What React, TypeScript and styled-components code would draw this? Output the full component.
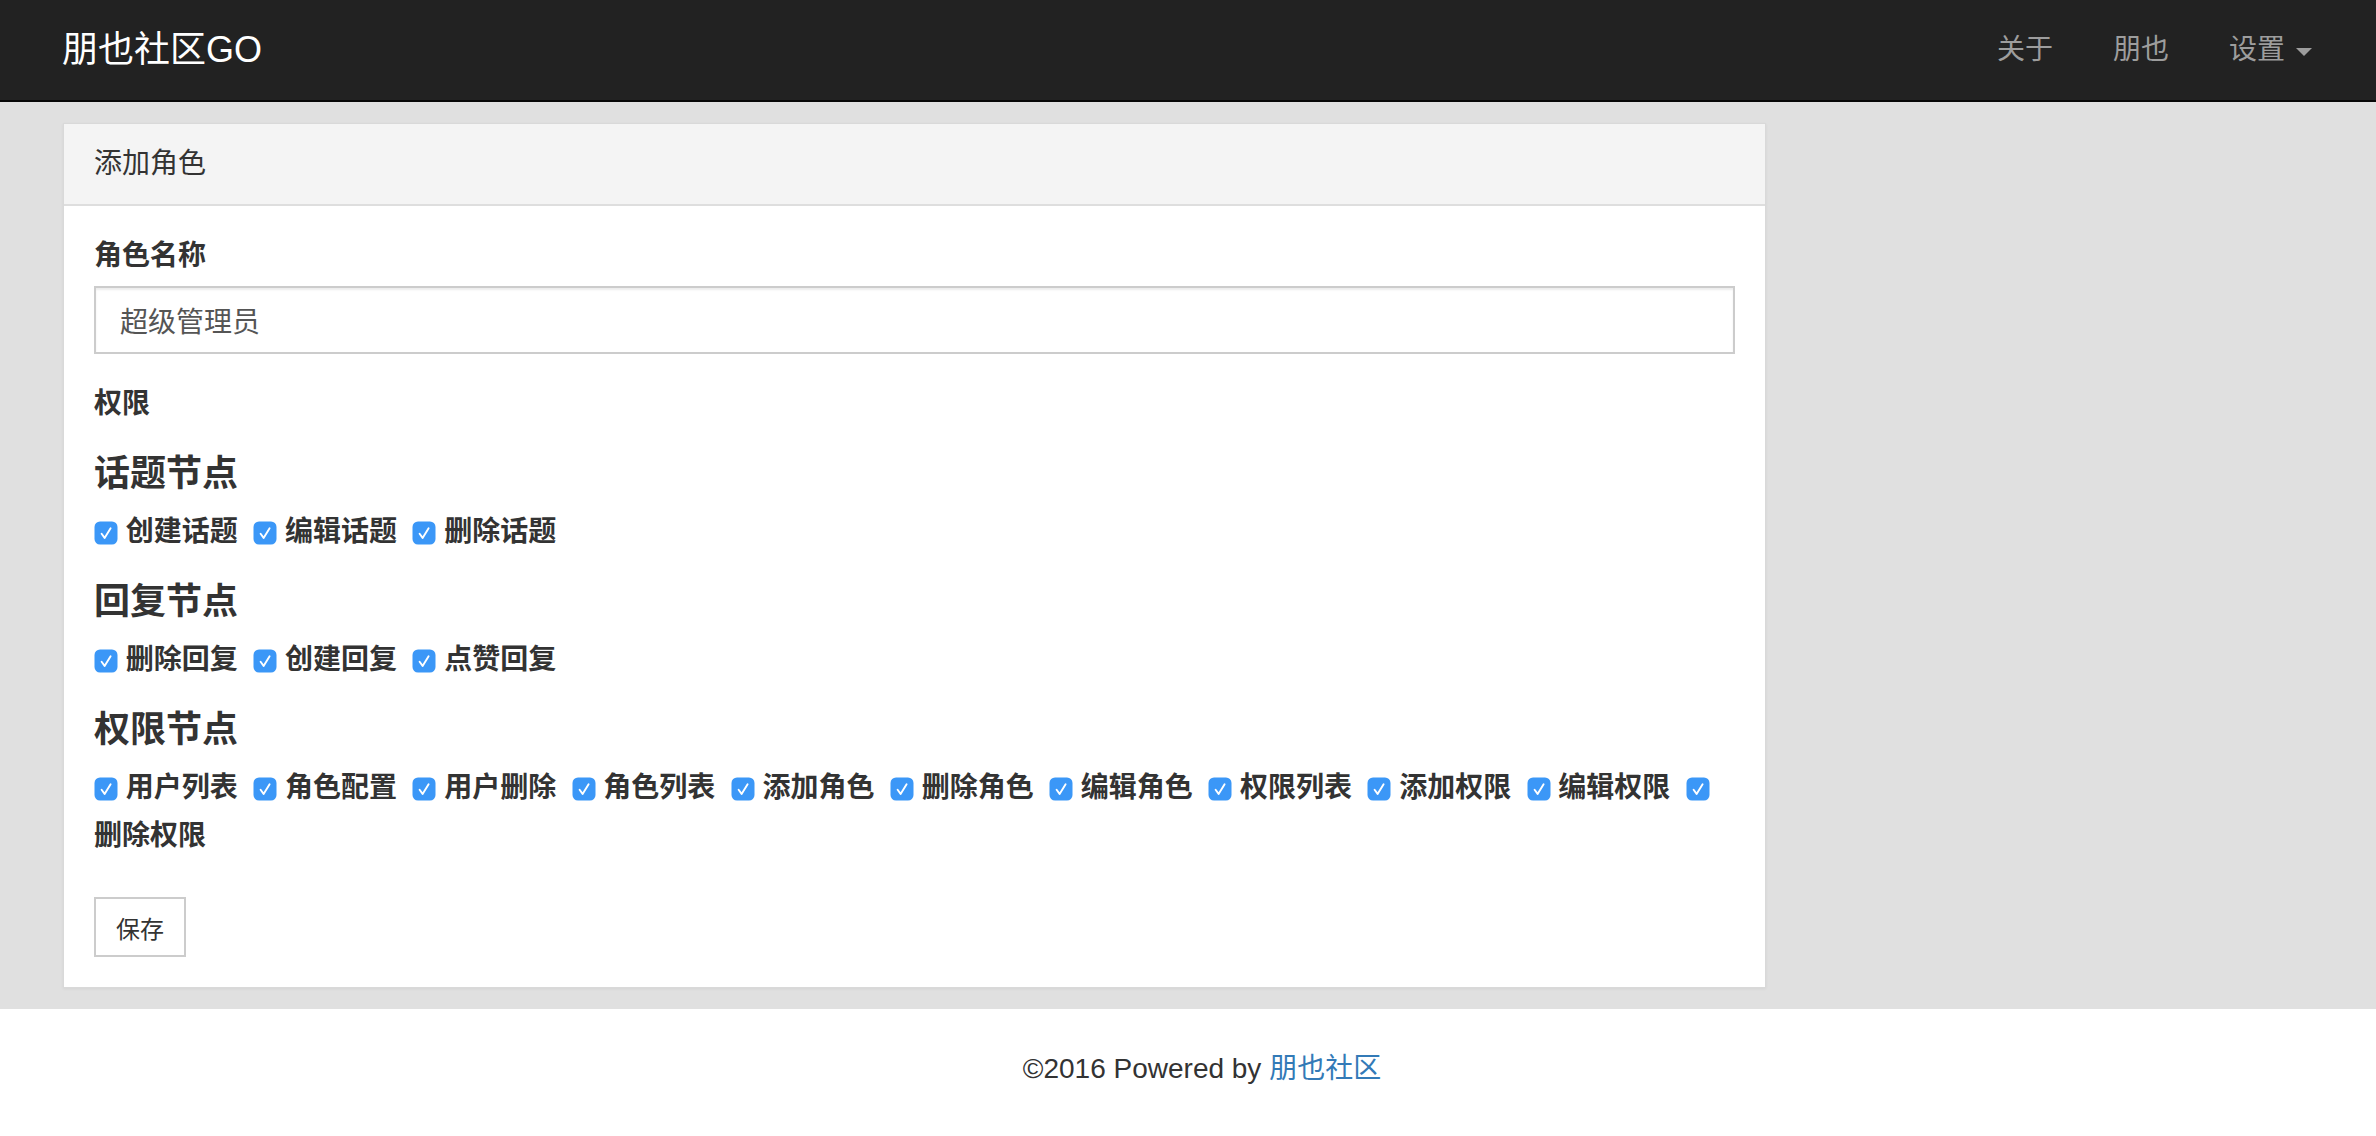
import React from "react";
import styled, { createGlobalStyle } from "styled-components";

const GlobalStyle = createGlobalStyle`
  html, body { margin: 0; padding: 0; }
  body {
    font-family: "Liberation Sans", "Noto Sans CJK SC", sans-serif;
    font-size: 28px;
    line-height: 40px;
    color: #333;
    background: #fff;
  }
  * { box-sizing: border-box; }
`;

const Navbar = styled.header`
  height: 102px;
  background: #222;
  border-bottom: 2px solid #080808;
  display: flex;
  align-items: center;
  justify-content: space-between;
  padding: 0 34px 0 62px;
`;

const Brand = styled.a`
  font-size: 36px;
  line-height: 100px;
  color: #fff;
  text-decoration: none;
`;

const NavList = styled.nav`
  display: flex;
  align-items: center;
`;

const NavLink = styled.a`
  display: flex;
  align-items: center;
  padding: 0 30px;
  line-height: 100px;
  font-size: 28px;
  color: #9d9d9d;
  text-decoration: none;
`;

const Caret = styled.span`
  display: inline-block;
  width: 0;
  height: 0;
  margin-left: 11px;
  margin-top: 4px;
  border-top: 8px solid #9d9d9d;
  border-left: 8px solid transparent;
  border-right: 8px solid transparent;
`;

const Main = styled.main`
  background: #e0e0e0;
  padding: 21px 0 21px 63px;
`;

const Panel = styled.section`
  width: 1703px;
  background: #fff;
  border: 1px solid #d9d9d9;
  box-shadow: 0 1px 3px rgba(0, 0, 0, 0.06);
`;

const PanelHeading = styled.div`
  background: #f4f4f4;
  padding: 20px 30px;
  line-height: 40px;
  font-size: 28px;
  color: #333;
  border-bottom: 2px solid #dedede;
`;

const PanelBody = styled.form`
  padding: 30px;
`;

const FormGroup = styled.div`
  margin-bottom: 30px;
`;

const Label = styled.label`
  display: block;
  font-weight: bold;
  line-height: 40px;
  margin-bottom: 10px;
`;

const SectionLabel = styled.div`
  font-weight: bold;
  line-height: 40px;
`;

const TextInput = styled.input`
  display: block;
  width: 100%;
  height: 68px;
  padding: 0 24px;
  font-family: inherit;
  font-size: 28px;
  color: #555;
  background: #fff;
  border: 2px solid #ccc;
  border-radius: 0;
  box-shadow: inset 0 2px 2px rgba(0, 0, 0, 0.075);
  outline: none;
`;

const GroupTitle = styled.h4<{ $first?: boolean }>`
  margin: ${(p) => (p.$first ? 30 : 26)}px 0 14px;
  font-size: 36px;
  line-height: 40px;
  font-weight: bold;
  color: #333;
`;

const CheckRow = styled.div`
  line-height: 48px;
  font-weight: bold;
`;

const CheckItem = styled.label`
  display: inline;
  cursor: pointer;
  &:not(:first-child) > span:first-child {
    margin-left: 7.6px;
  }
`;

const CheckBox = styled.span`
  display: inline-block;
  width: 24px;
  height: 24px;
  vertical-align: middle;
  position: relative;
  top: -1px;
  svg {
    display: block;
  }
`;

const CheckText = styled.span`
  white-space: nowrap;
`;

const SaveButton = styled.button`
  display: block;
  margin-top: 37px;
  height: 60px;
  padding: 0 20px;
  font-family: inherit;
  font-size: 24px;
  color: #333;
  background: #fff;
  border: 2px solid #ccc;
  border-radius: 0;
  cursor: pointer;
`;

const Footer = styled.footer`
  background: #fff;
  text-align: center;
  padding: 40px 0 40px 28px;
  line-height: 40px;
  font-size: 28px;
  color: #333;
`;

const FooterLink = styled.a`
  color: #337ab7;
  text-decoration: none;
`;

const Tick = () => (
  <svg width="24" height="24" viewBox="0 0 24 24">
    <rect x="0.5" y="0.5" width="23" height="23" rx="5.5" fill="#3b97f7" />
    <path
      d="M7.6 12.8 L10.6 16.9 L16.6 7.2"
      fill="none"
      stroke="#fff"
      strokeWidth="1.9"
      strokeLinecap="round"
      strokeLinejoin="round"
    />
  </svg>
);

const groups: { title: string; items: string[] }[] = [
  { title: "话题节点", items: ["创建话题", "编辑话题", "删除话题"] },
  { title: "回复节点", items: ["删除回复", "创建回复", "点赞回复"] },
  {
    title: "权限节点",
    items: [
      "用户列表",
      "角色配置",
      "用户删除",
      "角色列表",
      "添加角色",
      "删除角色",
      "编辑角色",
      "权限列表",
      "添加权限",
      "编辑权限",
      "删除权限",
    ],
  },
];

export default function App() {
  return (
    <>
      <GlobalStyle />
      <Navbar>
        <Brand href="#">朋也社区GO</Brand>
        <NavList>
          <NavLink href="#">关于</NavLink>
          <NavLink href="#">朋也</NavLink>
          <NavLink href="#">
            设置
            <Caret />
          </NavLink>
        </NavList>
      </Navbar>
      <Main>
        <Panel>
          <PanelHeading>添加角色</PanelHeading>
          <PanelBody onSubmit={(e) => e.preventDefault()}>
            <FormGroup>
              <Label>角色名称</Label>
              <TextInput defaultValue="超级管理员" />
            </FormGroup>
            <SectionLabel>权限</SectionLabel>
            {groups.map((g, gi) => (
              <div key={g.title}>
                <GroupTitle $first={gi === 0}>{g.title}</GroupTitle>
                <CheckRow>
                  {g.items.map((it, i) => (
                    <React.Fragment key={it}>
                      {i > 0 ? " " : null}
                      <CheckItem>
                        <CheckBox>
                          <Tick />
                        </CheckBox>{" "}
                        <CheckText>{it}</CheckText>
                      </CheckItem>
                    </React.Fragment>
                  ))}
                </CheckRow>
              </div>
            ))}
            <SaveButton type="submit">保存</SaveButton>
          </PanelBody>
        </Panel>
      </Main>
      <Footer>
        ©2016 Powered by <FooterLink href="#">朋也社区</FooterLink>
      </Footer>
    </>
  );
}
